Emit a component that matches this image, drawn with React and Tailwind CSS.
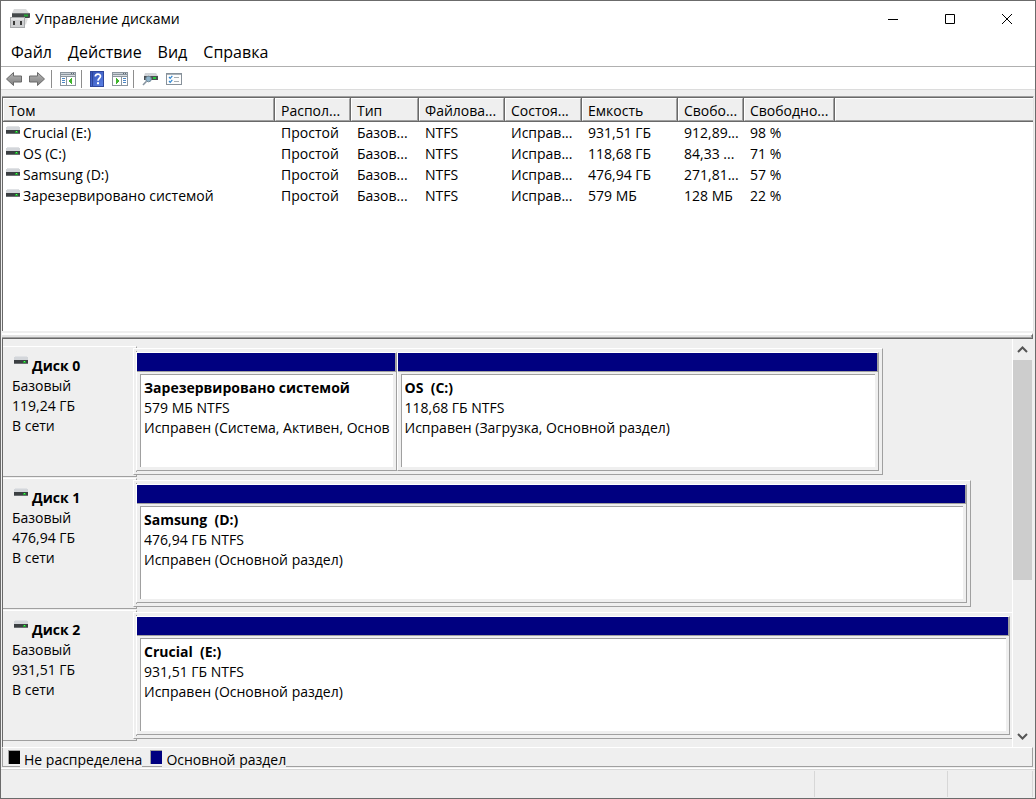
import React from "react";

const volumes = [
  { name: "Crucial (E:)", layout: "Простой", type: "Базов...", fs: "NTFS", status: "Исправ...", capacity: "931,51 ГБ", free: "912,89...", percent: "98 %" },
  { name: "OS (C:)", layout: "Простой", type: "Базов...", fs: "NTFS", status: "Исправ...", capacity: "118,68 ГБ", free: "84,33 ...", percent: "71 %" },
  { name: "Samsung (D:)", layout: "Простой", type: "Базов...", fs: "NTFS", status: "Исправ...", capacity: "476,94 ГБ", free: "271,81...", percent: "57 %" },
  { name: "Зарезервировано системой", layout: "Простой", type: "Базов...", fs: "NTFS", status: "Исправ...", capacity: "579 МБ", free: "128 МБ", percent: "22 %" },
];

const columns = [
  { title: "Том", width: "w-[272px]" },
  { title: "Распол...", width: "w-[76px]" },
  { title: "Тип", width: "w-[68px]" },
  { title: "Файлова...", width: "w-[86px]" },
  { title: "Состоя...", width: "w-[77px]" },
  { title: "Емкость", width: "w-[96px]" },
  { title: "Свобо...", width: "w-[66px]" },
  { title: "Свободно...", width: "w-[91px]" },
];

const disks = [
  {
    name: "Диск 0",
    size: "119,24 ГБ",
    frame: "w-[85.3%] border-r",
    inner: "pr-[3px]",
    partitions: [
      { name: "Зарезервировано системой", size: "579 МБ NTFS", status: "Исправен (Система, Активен, Основ", grow: "grow-[260]" },
      { name: "OS  (C:)", size: "118,68 ГБ NTFS", status: "Исправен (Загрузка, Основной раздел)", grow: "grow-[483]" },
    ],
  },
  {
    name: "Диск 1",
    size: "476,94 ГБ",
    frame: "w-[95.3%] border-r",
    inner: "pr-[3px]",
    partitions: [
      { name: "Samsung  (D:)", size: "476,94 ГБ NTFS", status: "Исправен (Основной раздел)", grow: "grow" },
    ],
  },
  {
    name: "Диск 2",
    size: "931,51 ГБ",
    frame: "w-full",
    inner: "pr-0.5",
    partitions: [
      { name: "Crucial  (E:)", size: "931,51 ГБ NTFS", status: "Исправен (Основной раздел)", grow: "grow" },
    ],
  },
];

const DriveIcon = () => (
  <svg width="14" height="8" viewBox="0 0 14 8" className="shrink-0" shapeRendering="crispEdges">
    <path d="M1 0h12v1h1v3H0V1h1z" fill="#d3d6da" />
    <path d="M1 0h12v1H1z" fill="#e0e2e5" />
    <rect x="0" y="4" width="14" height="4" fill="#3b3f42" />
    <rect x="0" y="7" width="14" height="1" fill="#6b6f72" />
    <rect x="9" y="5" width="3" height="2" fill="#1f9a2c" />
    <rect x="10" y="5" width="1" height="1" fill="#4dff5c" />
  </svg>
);

const AppIcon = () => (
  <svg width="20" height="19" viewBox="0 0 20 19">
    <path d="M4 0h12l3 4H2z" fill="#d9dadb" />
    <path d="M2 4h18v4.500l-1 .5H2z" fill="#44484a" />
    <path d="M2 4h18v1H2z" fill="#6d7173" />
    <rect x="14" y="5.500" width="4" height="2" fill="#22a834" />
    <path d="M0 8h15v11H0z" fill="#a7a9ab" />
    <path d="M1 9h13v9H1z" fill="#cfd0d2" />
    <path d="M1 9h13v2H1z" fill="#e2e3e4" />
    <rect x="3" y="12" width="2" height="4" fill="#3a3a3a" />
    <rect x="10" y="12" width="2" height="4" fill="#3a3a3a" />
    <path d="M15 9l3 .5-2 6h-1z" fill="#e0e0e0" />
  </svg>
);

const ArrowIcon = ({ right }) => (
  <svg width="18" height="16" viewBox="0 0 18 16">
    <defs>
      <linearGradient id="arrowFill" x1="0" y1="0" x2="0" y2="1">
        <stop offset="0" stopColor="#b4b4b4" />
        <stop offset="1" stopColor="#808080" />
      </linearGradient>
    </defs>
    <path
      d={right ? "M16.500 8L9.500 1.500V5H1.500V11H9.500V14.500z" : "M1.500 8L8.500 1.500V5H16.500V11H8.500V14.500z"}
      fill="url(#arrowFill)"
      stroke="#6a6a6a"
      strokeLinejoin="round"
    />
  </svg>
);

const PaneIcon = ({ right }) => (
  <svg width="16" height="14" viewBox="0 0 16 14" shapeRendering="crispEdges">
    <rect x="0" y="0" width="16" height="14" fill="#8b959d" />
    <rect x="1" y="1" width="14" height="1" fill="#c9d0d6" />
    <rect x="11" y="1" width="1" height="1" fill="#59656e" />
    <rect x="13" y="1" width="1" height="1" fill="#59656e" />
    <rect x="1" y="3" width="14" height="1" fill="#d9dee2" />
    <rect x="1" y="5" width="14" height="8" fill="#fff" />
    <rect x={right ? 9 : 6} y="5" width="1" height="8" fill="#8b959d" />
    <path d={right ? "M11 6h3v1h-3zM11 8h3v1h-3zM11 10h3v1h-3z" : "M2 6h3v1H2zM2 8h3v1H2zM2 10h3v1H2z"} fill="#4c86c4" />
    <path d={right ? "M4 6v6h1v-1h1v-1h1V8H6V7H5V6z" : "M12 6v6h-1v-1h-1v-1H9V8h1V7h1V6z"} fill="#3fb52c" />
  </svg>
);

const HelpIcon = () => (
  <svg width="14" height="16" viewBox="0 0 14 16">
    <defs>
      <linearGradient id="helpFill" x1="0" y1="0" x2="1" y2="1">
        <stop offset="0" stopColor="#3350b4" />
        <stop offset="1" stopColor="#5b82e6" />
      </linearGradient>
    </defs>
    <rect x="0.500" y="0.500" width="13" height="15" fill="url(#helpFill)" stroke="#2f479c" />
    <path d="M2.500 1v14" stroke="#2c459c" />
    <path d="M5.300 5.600C5.300 2.300 10.500 2.300 10.500 5.300C10.500 7.300 8 7.600 8 9.800" fill="none" stroke="#fff" strokeWidth="1.700" />
    <rect x="7" y="11.200" width="2" height="2" fill="#fff" />
  </svg>
);

const RescanIcon = () => (
  <svg width="16" height="14" viewBox="0 0 16 14">
    <path d="M3 1h11l2 3H2z" fill="#d0d3d7" />
    <rect x="2" y="4" width="14" height="4" fill="#4a4e51" />
    <rect x="11" y="5" width="3" height="2" fill="#25c83a" />
    <circle cx="6.500" cy="7" r="2.800" fill="#8fb4cc" stroke="#6f8796" />
    <path d="M4.500 9.200L1 13" stroke="#8794a0" strokeWidth="1.600" />
  </svg>
);

const ListIcon = () => (
  <svg width="16" height="12" viewBox="0 0 16 12">
    <rect x="0.500" y="0.500" width="15" height="11" fill="#fdfdfd" stroke="#87919a" />
    <path d="M1 1.500h14" stroke="#aab2b8" />
    <path d="M3 4l1.200 1.300L6.300 2.800M3 8l1.200 1.300L6.300 6.800" fill="none" stroke="#2f86d1" strokeWidth="1.200" />
    <path d="M8 4.500h5M8 8.500h5" stroke="#a5acb2" />
  </svg>
);

const ToolButton = ({ label, children }) => (
  <button aria-label={label} className="flex items-center justify-center">
    {children}
  </button>
);

const ToolSeparator = () => <div className="w-px h-[18px] bg-[#8d8d8d] ml-[5px] mr-2" />;

const Partition = ({ partition }) => (
  <div className={`${partition.grow} basis-0 min-w-0 flex flex-col border-t border-l border-t-white border-l-white border-r border-b border-r-[#a0a0a0] border-b-[#a0a0a0]`}>
    <div className="h-[19px] bg-[#000080] border-b border-r border-[#a0a0a0]" />
    <div className="flex-1 pt-0.5 pl-[3px] pr-[3px] pb-[3px]">
      <div className="h-full bg-white border-t border-l border-[#a0a0a0] pl-[3px] pr-[3px] pt-[3px]">
        <div className="overflow-hidden whitespace-pre leading-5">
          <p className="font-bold">{partition.name}</p>
          <p>{partition.size}</p>
          <p>{partition.status}</p>
        </div>
      </div>
    </div>
  </div>
);

const DiskRow = ({ disk }) => (
  <div className="flex h-[132px]">
    {/* The label cell runs under the left edge of the frame */}
    <div className="w-[134px] -mr-1 shrink-0 h-[131px] border-t border-t-white border-b border-b-[#a0a0a0] border-r border-r-[#a0a0a0] [border-right-style:dashed] pl-[9px] pt-[9px] leading-5">
      <div className="flex pl-0.5 gap-1">
        <DriveIcon />
        <p className="font-bold">{disk.name}</p>
      </div>
      <p>Базовый</p>
      <p>{disk.size}</p>
      <p>В сети</p>
    </div>
    <div className="flex-1 min-w-0 pt-0.5 pb-[3px]">
      <div className={`${disk.frame} h-[127px] border-t border-l border-t-white border-l-white border-b border-r-[#a0a0a0] border-b-[#a0a0a0] pt-[3px] pl-0.5 pb-[3px] ${disk.inner} flex`}>
        {disk.partitions.map((partition) => (
          <Partition key={partition.name} partition={partition} />
        ))}
      </div>
    </div>
  </div>
);

const App = () => {
  return (
    <div className="min-h-screen flex flex-col bg-[#efefef] border border-[#6b6b6b] text-black text-[14px] font-['Open_Sans','Noto_Sans',sans-serif] cursor-default">
      {/* Title bar */}
      <header className="bg-white flex items-center h-[35px] pl-[9px]">
        <AppIcon />
        <h1 className="flex-1 pl-[5px]">Управление дисками</h1>
        <button aria-label="Свернуть" className="w-[57px] h-full flex items-center justify-center">
          <svg width="10" height="10" viewBox="0 0 10 10" stroke="#000"><path d="M0 5.500h10" /></svg>
        </button>
        <button aria-label="Развернуть" className="w-[57px] h-full flex items-center justify-center">
          <svg width="10" height="10" viewBox="0 0 10 10" stroke="#000" fill="none"><path d="M.5.5h9v9h-9z" /></svg>
        </button>
        <button aria-label="Закрыть" className="w-[57px] h-full flex items-center justify-center">
          <svg width="10" height="10" viewBox="0 0 10 10" stroke="#000"><path d="M0 0l10 10M10 0L0 10" /></svg>
        </button>
      </header>

      {/* Menu */}
      <nav className="bg-white flex items-center h-[30px] pl-2.5 gap-4 text-[16px] pt-px">
        <button>Файл</button>
        <button>Действие</button>
        <button>Вид</button>
        <button>Справка</button>
      </nav>

      {/* Toolbar */}
      <div className="bg-white flex items-center h-6 pl-1 pt-0.5 border-t border-t-[#b0b0b0] border-b border-b-[#dcdcdc]">
        <div className="flex gap-[5px]">
          <ToolButton label="Назад"><ArrowIcon /></ToolButton>
          <ToolButton label="Вперед"><ArrowIcon right /></ToolButton>
        </div>
        <ToolSeparator />
        <ToolButton label="Показать дерево консоли"><PaneIcon /></ToolButton>
        <ToolSeparator />
        <div className="flex gap-2">
          <ToolButton label="Справка"><HelpIcon /></ToolButton>
          <ToolButton label="Показать панель действий"><PaneIcon right /></ToolButton>
        </div>
        <ToolSeparator />
        <div className="flex gap-2">
          <ToolButton label="Повторить проверку"><RescanIcon /></ToolButton>
          <ToolButton label="Список"><ListIcon /></ToolButton>
        </div>
      </div>

      {/* Volume list */}
      <div className="flex-1 mt-1.5 ml-px mr-px flex flex-col border-t border-t-[#a0a0a0] border-r border-r-[#e3e3e3]">
        <div className="flex-1 bg-white border-t border-l border-[#696969]">
          <table className="w-full table-fixed border-separate border-spacing-0 text-left whitespace-nowrap">
            <thead>
              <tr>
                {columns.map((column) => (
                  <th key={column.title} className={`${column.width} h-6 p-0 font-normal bg-[#efefef] border-r border-b border-[#696969]`}>
                    <div className="h-[23px] leading-6 pl-[5px] overflow-hidden border-t border-l border-t-white border-l-white border-r border-b border-r-[#a0a0a0] border-b-[#a0a0a0]">
                      {column.title}
                    </div>
                  </th>
                ))}
                <td className="p-0 bg-[#efefef] border-b border-[#696969]">
                  <div className="h-[23px] border-t border-l border-t-white border-l-white border-b border-b-[#a0a0a0]" />
                </td>
              </tr>
            </thead>
            <tbody>
              {volumes.map((volume) => (
                <tr key={volume.name} className="h-[21px] leading-[21px]">
                  <td className="p-0 pl-[3px]">
                    <div className="flex gap-[3px]">
                      <div className="pt-1"><DriveIcon /></div>
                      {volume.name}
                    </div>
                  </td>
                  <td className="p-0 pl-1.5">{volume.layout}</td>
                  <td className="p-0 pl-1.5">{volume.type}</td>
                  <td className="p-0 pl-1.5">{volume.fs}</td>
                  <td className="p-0 pl-1.5">{volume.status}</td>
                  <td className="p-0 pl-1.5">{volume.capacity}</td>
                  <td className="p-0 pl-1.5">{volume.free}</td>
                  <td className="p-0 pl-1.5">{volume.percent}</td>
                  <td />
                </tr>
              ))}
            </tbody>
          </table>
        </div>
      </div>

      {/* Splitter */}
      <div className="ml-px mr-0.5 h-2 pt-0.5">
        <div className="h-1.5 bg-[#e3e3e3] border-t-2 border-t-white border-b border-b-[#696969] border-r border-r-[#696969]">
          <div className="h-[3px] border-b border-r border-[#a0a0a0]" />
        </div>
      </div>

      {/* Graphical view */}
      <div className="ml-px mr-0.5 border-l border-l-[#696969] flex">
        <div className="flex-1 min-w-0 pt-[7px] pb-[5px]">
          {disks.map((disk) => (
            <DiskRow key={disk.name} disk={disk} />
          ))}
        </div>
        <div className="w-[21px] border-l border-l-white flex flex-col pr-px">
          <button aria-label="Вверх" className="h-[21px] flex items-center justify-center">
            <svg width="11" height="7" viewBox="0 0 11 7" fill="none" stroke="#555" strokeWidth="2"><path d="M1 6L5.500 1.500L10 6" /></svg>
          </button>
          <div className="flex-1">
            <div className="h-[60%] bg-[#cdcdcd]" />
          </div>
          <button aria-label="Вниз" className="h-[21px] flex items-center justify-center">
            <svg width="11" height="7" viewBox="0 0 11 7" fill="none" stroke="#555" strokeWidth="2"><path d="M1 1L5.500 5.500L10 1" /></svg>
          </button>
        </div>
      </div>

      {/* Legend */}
      <div className="ml-px mr-0.5 h-5 flex border-t border-t-white border-l border-l-[#a0a0a0] border-r border-r-[#a0a0a0] border-b border-b-[#a0a0a0] pl-[5px] leading-6">
        <div className="w-3 h-[14px] mt-0.5 bg-black border-t border-l border-[#a0a0a0]" />
        <span className="pl-1 h-[19px] bg-[#efefef]">Не распределена</span>
        <div className="w-3 h-[14px] mt-0.5 ml-2 bg-[#000080] border-t border-l border-[#a0a0a0]" />
        <span className="pl-1 h-[19px] bg-[#efefef]">Основной раздел</span>
      </div>

      {/* Status bar */}
      <div className="mt-px h-[30px] flex border-t border-t-white pb-px">
        <div className="flex-1 flex border-t border-t-[#d7d7d7] pt-px pr-0.5">
          <div className="flex-1 border-r border-r-[#d7d7d7]" />
          <div className="w-[133px] border-r border-r-[#d7d7d7]" />
          <div className="w-[85px] border-r border-r-[#d7d7d7]" />
        </div>
      </div>
    </div>
  );
};

export default App;
